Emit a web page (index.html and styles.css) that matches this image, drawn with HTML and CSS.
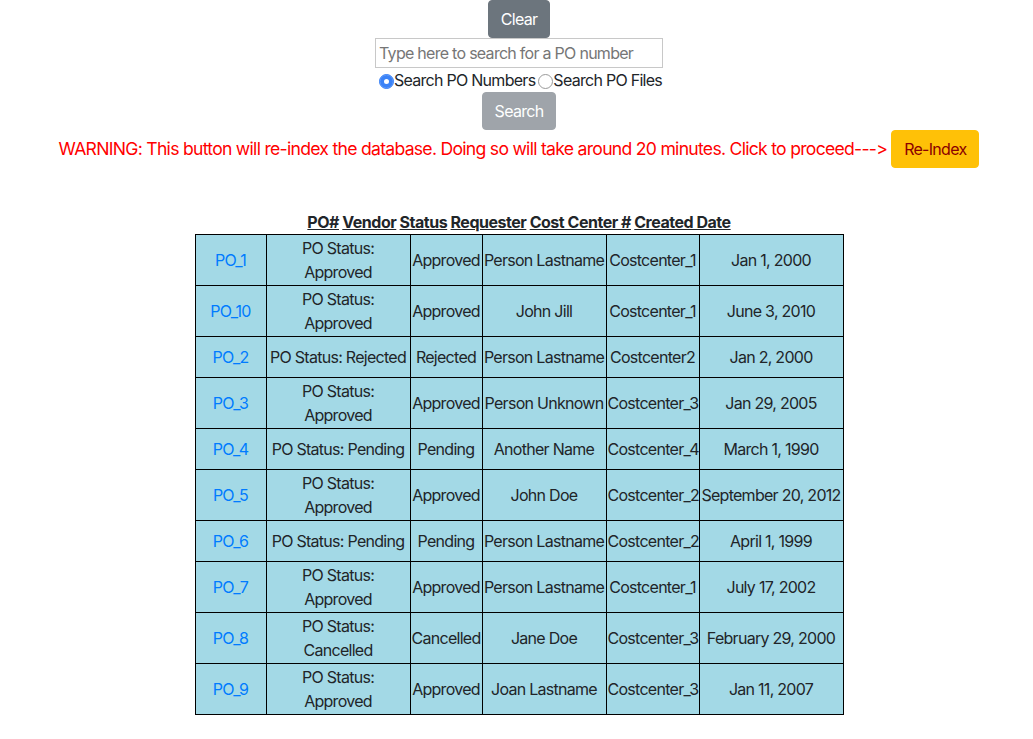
FILE: index.html
```html
<!DOCTYPE html>
<html>
<head>
<meta charset="utf-8">
<link rel="stylesheet" href="styles.css">
</head>
<body>
<div class="page">
  <div class="controls">
    <button class="btn btn-secondary">Clear</button>
    <input class="search-input" type="text" placeholder="Type here to search for a PO number">
    <div class="radios">
      <label class="radio-label"><input type="radio" name="mode" class="radio" checked>Search PO Numbers</label>
      <label class="radio-label"><input type="radio" name="mode" class="radio">Search PO Files</label>
    </div>
    <button class="btn btn-secondary btn-disabled">Search</button>
    <div class="warning-row">
      <span class="warning">WARNING: This button will re-index the database. Doing so will take around 20 minutes. Click to proceed---&gt;</span>
      <button class="btn btn-warning">Re-Index</button>
    </div>
  </div>

  <div class="headers">
    <span>PO#</span> <span>Vendor</span> <span>Status</span> <span>Requester</span> <span>Cost Center #</span> <span>Created Date</span>
  </div>

  <table class="po-table">
    <colgroup>
      <col class="c1"><col class="c2"><col class="c3"><col class="c4"><col class="c5"><col class="c6">
    </colgroup>
    <tbody>
      <tr><td><a class="po-link" href="#">PO_1</a></td><td class="wrap">PO Status: Approved</td><td>Approved</td><td>Person Lastname</td><td>Costcenter_1</td><td>Jan 1, 2000</td></tr>
      <tr><td><a class="po-link" href="#">PO_10</a></td><td class="wrap">PO Status: Approved</td><td>Approved</td><td>John Jill</td><td>Costcenter_1</td><td>June 3, 2010</td></tr>
      <tr><td><a class="po-link" href="#">PO_2</a></td><td class="wrap">PO Status: Rejected</td><td>Rejected</td><td>Person Lastname</td><td>Costcenter2</td><td>Jan 2, 2000</td></tr>
      <tr><td><a class="po-link" href="#">PO_3</a></td><td class="wrap">PO Status: Approved</td><td>Approved</td><td>Person Unknown</td><td>Costcenter_3</td><td>Jan 29, 2005</td></tr>
      <tr><td><a class="po-link" href="#">PO_4</a></td><td class="wrap">PO Status: Pending</td><td>Pending</td><td>Another Name</td><td>Costcenter_4</td><td>March 1, 1990</td></tr>
      <tr><td><a class="po-link" href="#">PO_5</a></td><td class="wrap">PO Status: Approved</td><td>Approved</td><td>John Doe</td><td>Costcenter_2</td><td>September 20, 2012</td></tr>
      <tr><td><a class="po-link" href="#">PO_6</a></td><td class="wrap">PO Status: Pending</td><td>Pending</td><td>Person Lastname</td><td>Costcenter_2</td><td>April 1, 1999</td></tr>
      <tr><td><a class="po-link" href="#">PO_7</a></td><td class="wrap">PO Status: Approved</td><td>Approved</td><td>Person Lastname</td><td>Costcenter_1</td><td>July 17, 2002</td></tr>
      <tr><td><a class="po-link" href="#">PO_8</a></td><td class="wrap">PO Status: Cancelled</td><td>Cancelled</td><td>Jane Doe</td><td>Costcenter_3</td><td>February 29, 2000</td></tr>
      <tr><td><a class="po-link" href="#">PO_9</a></td><td class="wrap">PO Status: Approved</td><td>Approved</td><td>Joan Lastname</td><td>Costcenter_3</td><td>Jan 11, 2007</td></tr>
    </tbody>
  </table>
</div>
</body>
</html>
```
FILE: styles.css
```css
* { box-sizing: border-box; }
html, body { margin: 0; padding: 0; background: #fff; }
body {
  font-family: Inter, "Noto Sans", "Liberation Sans", sans-serif;
  font-size: 16px;
  line-height: 24px;
  letter-spacing: -0.045em;
  color: #212529;
}
.page {
  padding-left: 5px;
  display: flex;
  flex-direction: column;
  align-items: center;
}
.controls {
  display: flex;
  flex-direction: column;
  align-items: center;
}
.btn {
  font-family: inherit;
  font-size: 16px;
  line-height: 24px;
  letter-spacing: -0.045em;
  padding: 6px 12px;
  border: 1px solid transparent;
  border-radius: 4px;
  cursor: pointer;
  white-space: nowrap;
  flex-shrink: 0;
}
.btn-secondary { background: #6c757d; border-color: #6c757d; color: #fff; }
.btn-disabled { opacity: 0.65; }
.btn-warning { background: #ffc107; border-color: #ffc107; color: #8b0000; }
.search-input {
  width: 288px;
  height: 30px;
  font-family: inherit;
  font-size: 16px;
  letter-spacing: -0.045em;
  padding: 1px 3px;
  border: 1px solid #c8c8c8;
  border-radius: 0;
  color: #212529;
}
.search-input::placeholder { color: #767676; }
.radios {
  display: flex;
  align-items: center;
  height: 24px;
}
.radio-label { display: inline-flex; align-items: center; }
.radio {
  appearance: none;
  -webkit-appearance: none;
  width: 15px;
  height: 15px;
  margin: 3px 0 0 3px;
  border-radius: 50%;
  border: 1px solid #9a9a9a;
  background: #fff;
}
.radio:checked {
  background: #3a82f7;
  border-color: #3a82f7;
  box-shadow: inset 0 0 0 4px #3a82f7, inset 0 0 0 8px #fff;
}
.warning-row {
  display: flex;
  align-items: center;
  gap: 4px;
  white-space: nowrap;
}
.warning { color: #ff0000; font-size: 17.6px; }
.headers {
  margin-top: 42px;
  font-weight: 700;
  line-height: 24px;
  letter-spacing: -0.03em;
}
.headers span { text-decoration: underline; }
.po-table {
  border-collapse: collapse;
  table-layout: fixed;
  width: 648px;
}
.c1 { width: 71px; }
.c2 { width: 144px; }
.c3 { width: 72px; }
.c4 { width: 124px; }
.c5 { width: 93px; }
.c6 { width: 144px; }
.po-table td {
  border: 1px solid #000;
  background: #a3d9e6;
  padding: 1px;
  text-align: center;
  vertical-align: middle;
  white-space: nowrap;
}
.po-table td.wrap { white-space: normal; }
.po-link {
  display: inline-block;
  padding: 7px 0;
  color: #007bff;
  text-decoration: none;
}
```
